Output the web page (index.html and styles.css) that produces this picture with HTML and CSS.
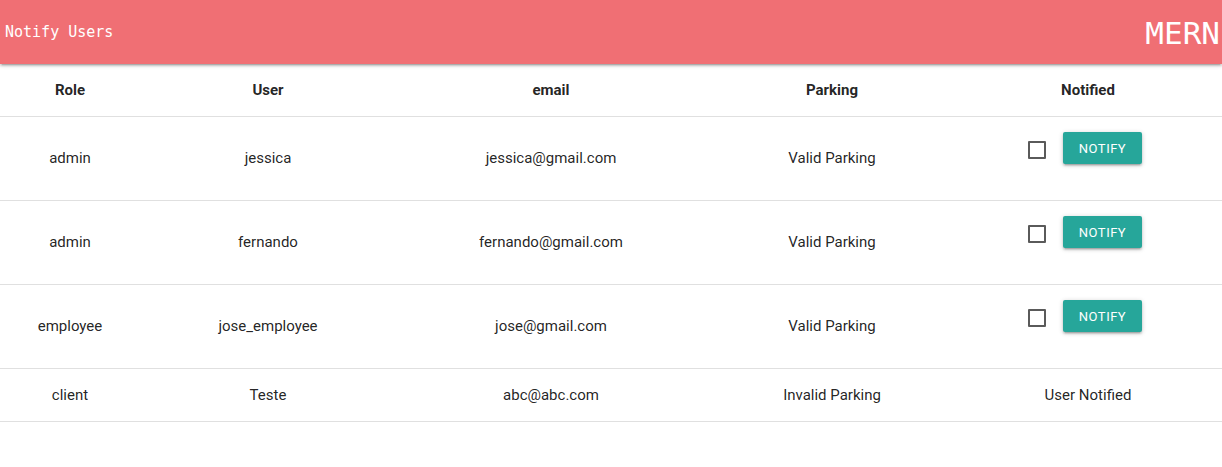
FILE: index.html
```html
<!DOCTYPE html>
<html>
<head>
<meta charset="utf-8">
<link rel="stylesheet" href="styles.css">
</head>
<body>
<nav class="nav">
  <span class="nav-title">Notify Users</span>
  <span class="nav-logo">MERN</span>
</nav>
<table class="users">
  <colgroup>
    <col class="c-role"><col class="c-user"><col class="c-email"><col class="c-park"><col class="c-notif">
  </colgroup>
  <thead>
    <tr><th>Role</th><th>User</th><th>email</th><th>Parking</th><th class="notif-col">Notified</th></tr>
  </thead>
  <tbody>
    <tr class="tall">
      <td>admin</td><td>jessica</td><td>jessica@gmail.com</td><td>Valid Parking</td>
      <td class="notif notif-col"><div class="actions"><span class="check"></span><button class="btn">Notify</button></div></td>
    </tr>
    <tr class="tall">
      <td>admin</td><td>fernando</td><td>fernando@gmail.com</td><td>Valid Parking</td>
      <td class="notif notif-col"><div class="actions"><span class="check"></span><button class="btn">Notify</button></div></td>
    </tr>
    <tr class="tall">
      <td>employee</td><td>jose_employee</td><td>jose@gmail.com</td><td>Valid Parking</td>
      <td class="notif notif-col"><div class="actions"><span class="check"></span><button class="btn">Notify</button></div></td>
    </tr>
    <tr>
      <td>client</td><td>Teste</td><td>abc@abc.com</td><td>Invalid Parking</td><td class="notif-col">User Notified</td>
    </tr>
  </tbody>
</table>
</body>
</html>
```
FILE: styles.css
```css
html, body {
  margin: 0;
  padding: 0;
  background: #fff;
}
body {
  font-family: Roboto, "Liberation Sans", sans-serif;
  color: rgba(0, 0, 0, 0.87);
  font-size: 15px;
}
.nav {
  height: 64px;
  background: #f06f74;
  display: flex;
  align-items: center;
  justify-content: space-between;
  padding: 0 2px 0 5px;
  box-shadow: 0 2px 2px 0 rgba(0,0,0,.14), 0 3px 1px -2px rgba(0,0,0,.12), 0 1px 5px 0 rgba(0,0,0,.2);
  color: #fff;
  font-family: "DejaVu Sans Mono", monospace;
  position: relative;
  z-index: 1;
}
.nav-title {
  font-size: 15px;
  margin-top: -1px;
}
.nav-logo {
  font-size: 31px;
  margin-top: 1px;
}
.users {
  width: 100%;
  border-collapse: collapse;
  table-layout: fixed;
}
.c-role { width: 140px; }
.c-user { width: 256px; }
.c-email { width: 310px; }
.c-park { width: 252px; }
.c-notif { width: 264px; }
.users th, .users td {
  text-align: center;
  padding: 15px 5px;
  line-height: 22px;
}
.users th {
  font-weight: bold;
  line-height: 20px;
  padding-top: 16px;
  padding-bottom: 16px;
}
.users tr {
  border-bottom: 1px solid rgba(0, 0, 0, 0.12);
}
.users tbody td {
  vertical-align: middle;
}
.users tr.tall td {
  height: 53px;
  padding-top: 14px;
  padding-bottom: 16px;
}
.users .notif-col {
  padding-right: 9px;
}
.users tr.tall td.notif {
  vertical-align: top;
  padding-top: 15px;
  padding-bottom: 15px;
}
.actions {
  display: flex;
  justify-content: center;
  align-items: center;
  gap: 17px;
  padding-right: 6px;
}
.check {
  width: 14px;
  height: 14px;
  border: 2px solid #5a5a5a;
  border-radius: 1px;
  margin-top: 3px;
}
.btn {
  height: 32px;
  padding: 0 16px;
  background: #26a69a;
  color: #fff;
  border: none;
  border-radius: 2px;
  font-family: Roboto, "Liberation Sans", sans-serif;
  font-size: 13px;
  letter-spacing: .5px;
  text-transform: uppercase;
  box-shadow: 0 2px 2px 0 rgba(0,0,0,.14), 0 3px 1px -2px rgba(0,0,0,.12), 0 1px 5px 0 rgba(0,0,0,.2);
}
```
